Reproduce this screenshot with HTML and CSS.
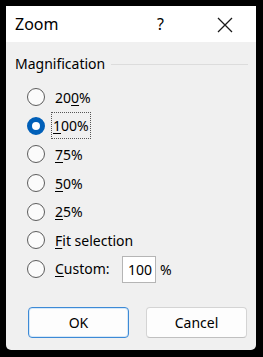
FILE: index.html
```html
<!DOCTYPE html>
<html>
<head>
<meta charset="utf-8">
<link rel="stylesheet" href="styles.css">
</head>
<body>
<div class="window">
  <div class="titlebar">
    <span class="title">Zoom</span>
    <span class="help">?</span>
    <svg class="close" width="16" height="16" viewBox="0 0 16 16"><path d="M1 1 L15 15 M15 1 L1 15" stroke="#1a1a1a" stroke-width="1.3" fill="none"/></svg>
  </div>
  <div class="content">
    <div class="group-head">
      <span class="group-label">Magnification</span>
      <span class="group-line"></span>
    </div>
    <div class="options">
      <div class="row"><span class="radio"></span><span class="label">20<u>0</u>%</span></div>
      <div class="row"><span class="radio checked"></span><span class="label focus"><u>1</u>00%</span></div>
      <div class="row"><span class="radio"></span><span class="label"><u>7</u>5%</span></div>
      <div class="row"><span class="radio"></span><span class="label"><u>5</u>0%</span></div>
      <div class="row"><span class="radio"></span><span class="label"><u>2</u>5%</span></div>
      <div class="row"><span class="radio"></span><span class="label"><u>F</u>it selection</span></div>
      <div class="row"><span class="radio"></span><span class="label custom-label"><u>C</u>ustom:</span><span class="input">100</span><span class="pct">%</span></div>
    </div>
    <div class="buttons">
      <span class="btn primary">OK</span>
      <span class="btn">Cancel</span>
    </div>
  </div>
</div>
</body>
</html>
```
FILE: styles.css
```css
html, body {
  margin: 0;
  padding: 0;
}
body {
  background: #000;
  width: 263px;
  height: 357px;
  padding: 6px 0 0 6px;
  box-sizing: border-box;
  font-family: "Noto Sans", "Open Sans", sans-serif;
  color: #000;
}
.window {
  width: 250px;
  height: 344px;
  background: #f0f0f0;
  border-radius: 0 0 5px 5px;
  display: flex;
  flex-direction: column;
  overflow: hidden;
}
.titlebar {
  height: 36px;
  background: #fff;
  display: flex;
  align-items: center;
  padding-left: 9px;
  flex: none;
}
.title {
  font-size: 16px;
  width: 142px;
}
.help {
  font-size: 16px;
  width: 60px;
}
.close {
  display: block;
  margin-top: 1px;
}
.content {
  flex: 1;
  display: flex;
  flex-direction: column;
  padding: 12px 8px 0 9px;
}
.group-head {
  display: flex;
  align-items: center;
  height: 18px;
}
.group-label {
  font-size: 14px;
}
.group-line {
  flex: 1;
  height: 1px;
  background: #dcdcdc;
  margin-left: 6px;
  margin-top: 2px;
}
.options {
  margin-top: 11px;
  display: flex;
  flex-direction: column;
}
.row {
  height: 28.6px;
  display: flex;
  align-items: center;
  padding-left: 12px;
  font-size: 14px;
}
.radio {
  width: 16px;
  height: 16px;
  border: 1px solid #5c5c5c;
  border-radius: 50%;
  background: #fbfbfb;
  flex: none;
  margin-right: 10px;
  box-sizing: content-box;
}
.radio.checked {
  background: #fff;
  border: 5px solid #005fb8;
  width: 8px;
  height: 8px;
}
.label u {
  text-decoration-thickness: 1px;
  text-underline-offset: 2px;
}
.label.focus {
  outline: 1px dotted #555;
  outline-offset: 0;
  padding: 3px 1px;
  margin-left: -3px;
}
.custom-label {
  width: 67px;
}
.input {
  border: 1px solid #b5b5b5;
  background: #fff;
  display: flex;
  align-items: center;
  justify-content: flex-end;
  padding-right: 3px;
  box-sizing: border-box;
  width: 34px;
  height: 27px;
  margin-top: 2px;
}
.pct {
  margin-left: 4px;
  margin-top: 2px;
}
.buttons {
  display: flex;
  margin-top: 24px;
  padding-left: 13px;
  gap: 17px;
}
.btn {
  width: 101px;
  height: 31px;
  box-sizing: border-box;
  border: 1px solid #d4d4d4;
  border-bottom-color: #c0c0c0;
  border-radius: 4px;
  background: #fdfdfd;
  display: flex;
  align-items: center;
  justify-content: center;
  font-size: 14px;
}
.btn.primary {
  border: 1px solid #3d8ad6;
  box-shadow: inset 0 0 0 1px #d6e8f8;
}
```
